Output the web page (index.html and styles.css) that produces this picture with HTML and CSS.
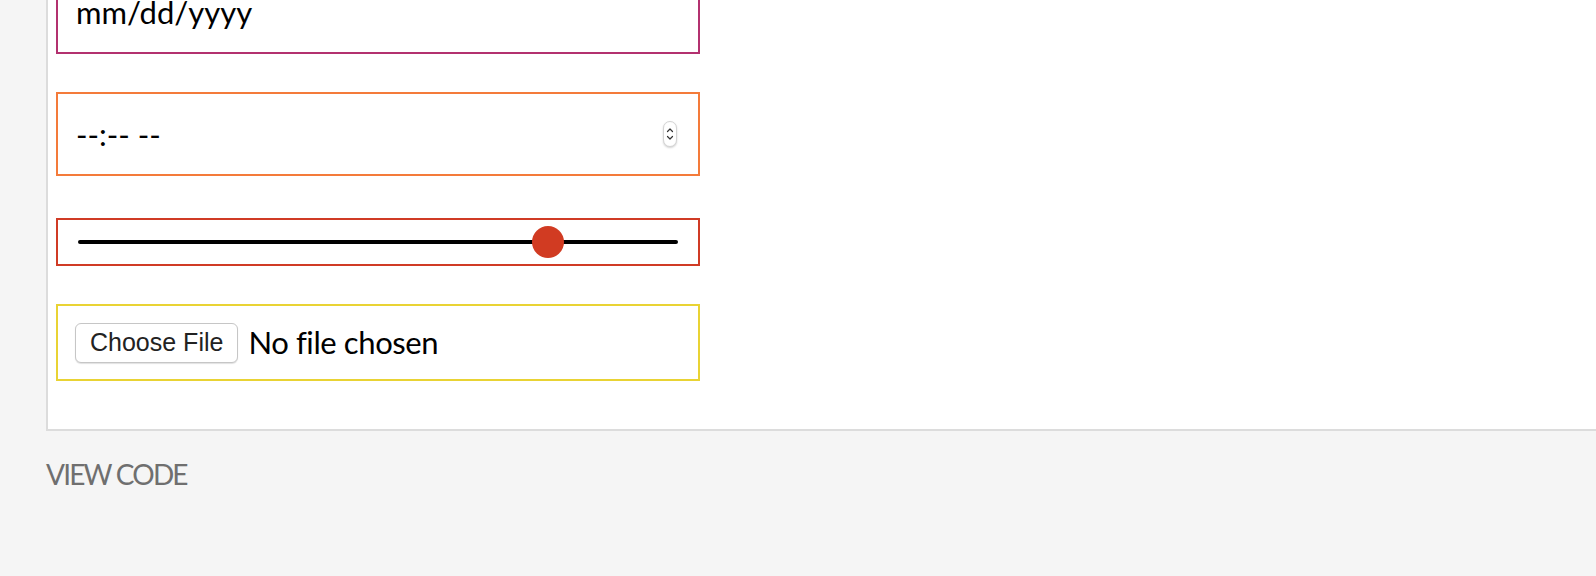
FILE: index.html
```html
<!DOCTYPE html>
<html lang="en">
<head>
<meta charset="utf-8">
<title>Inputs</title>
<link rel="stylesheet" href="styles.css">
</head>
<body>
<main class="page">
  <section class="panel">
    <div class="field field-date"><span class="field-text">mm/dd/yyyy</span></div>
    <div class="field field-time">
      <span class="field-text">--:-- --</span>
      <span class="stepper">
        <svg viewBox="0 0 14 26" width="14" height="26" aria-hidden="true">
          <path d="M4.5 10.5 L7 8 L9.5 10.5" fill="none" stroke="#333" stroke-width="1.2" stroke-linecap="round" stroke-linejoin="round"/>
          <path d="M4.5 15.5 L7 18 L9.5 15.5" fill="none" stroke="#333" stroke-width="1.2" stroke-linecap="round" stroke-linejoin="round"/>
        </svg>
      </span>
    </div>
    <div class="field field-range">
      <input class="slider" type="range" min="0" max="100" value="80">
    </div>
    <div class="field field-file">
      <span class="file-button">Choose File</span>
      <span class="file-status">No file chosen</span>
    </div>
  </section>
  <a class="view-code" href="#">VIEW CODE</a>
</main>
</body>
</html>
```
FILE: styles.css
```css
html, body {
  margin: 0;
  padding: 0;
}

body {
  background: #f5f5f5;
  font-family: Lato, "Noto Sans", sans-serif;
  color: #000;
  overflow: hidden;
}

.page {
  padding-left: 46px;
}

.panel {
  margin-top: -30px;
  background: #fff;
  border-left: 2px solid #dcdcdc;
  border-bottom: 2px solid #dcdcdc;
  padding: 0 0 48px 8px;
  display: flex;
  flex-direction: column;
  align-items: flex-start;
}

.field {
  box-sizing: border-box;
  width: 644px;
  border: 2px solid;
  display: flex;
  align-items: center;
  padding: 0 18px;
  font-size: 31px;
}

.field-date {
  height: 84px;
  border-color: #b3316f;
  margin-bottom: 38px;
}

.field-time {
  height: 84px;
  border-color: #f47b3a;
  margin-bottom: 42px;
  padding-right: 21px;
}

.field-text {
  line-height: 1;
}

.stepper {
  margin-left: auto;
  box-sizing: border-box;
  width: 14px;
  height: 26px;
  border: 1px solid #d4d4d4;
  border-radius: 7px;
  background: #fff;
  box-shadow: 0 1px 2px rgba(0, 0, 0, 0.18);
  display: flex;
  align-items: center;
  justify-content: center;
}

.stepper svg {
  display: block;
  flex: none;
}

.field-range {
  height: 48px;
  border-color: #d03b25;
  margin-bottom: 38px;
  padding: 0 20px;
}

.slider {
  -webkit-appearance: none;
  appearance: none;
  width: 100%;
  height: 32px;
  margin: 0;
  background: transparent;
}

.slider::-webkit-slider-runnable-track {
  height: 4px;
  background: #000;
  border-radius: 2px;
}

.slider::-webkit-slider-thumb {
  -webkit-appearance: none;
  appearance: none;
  width: 32px;
  height: 32px;
  margin-top: -14px;
  border-radius: 50%;
  background: #d13b22;
  border: none;
}

.field-file {
  height: 77px;
  border-color: #e9d334;
  padding-left: 17px;
}

.file-button {
  box-sizing: border-box;
  height: 40px;
  padding: 0 14px;
  display: flex;
  align-items: center;
  font-family: "Liberation Sans", Arial, sans-serif;
  font-size: 25px;
  color: #222;
  background: #fff;
  border: 1px solid #c6c6c6;
  border-radius: 6px;
  box-shadow: 0 1px 1px rgba(0, 0, 0, 0.12);
}

.file-status {
  margin-left: 10px;
  line-height: 1;
  letter-spacing: -0.4px;
}

.view-code {
  display: inline-block;
  margin-top: 27px;
  font-size: 28px;
  line-height: 32px;
  letter-spacing: -1.8px;
  color: #6f6f6f;
  text-decoration: none;
}
```
